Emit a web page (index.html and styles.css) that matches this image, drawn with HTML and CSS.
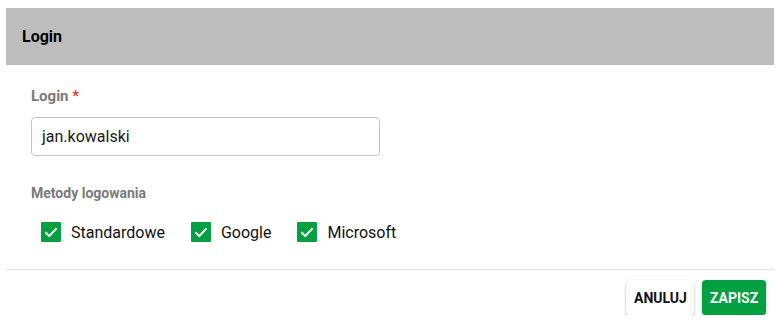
FILE: index.html
```html
<!DOCTYPE html>
<html lang="pl">
<head>
<meta charset="utf-8">
<title>Login</title>
<link rel="stylesheet" href="styles.css">
</head>
<body>
<div class="panel">
  <div class="panel-header">Login</div>
  <div class="panel-body">
    <label class="field-label">Login <span class="req">*</span></label>
    <div class="input">jan.kowalski</div>
    <div class="section-label">Metody logowania</div>
    <div class="checks">
      <div class="check">
        <span class="box"><svg viewBox="0 0 20 20" width="20" height="20"><path d="M4.5 10.2 L8.3 14 L15.6 6.4" fill="none" stroke="#fff" stroke-width="2"/></svg></span>
        <span class="check-label">Standardowe</span>
      </div>
      <div class="check">
        <span class="box"><svg viewBox="0 0 20 20" width="20" height="20"><path d="M4.5 10.2 L8.3 14 L15.6 6.4" fill="none" stroke="#fff" stroke-width="2"/></svg></span>
        <span class="check-label">Google</span>
      </div>
      <div class="check">
        <span class="box"><svg viewBox="0 0 20 20" width="20" height="20"><path d="M4.5 10.2 L8.3 14 L15.6 6.4" fill="none" stroke="#fff" stroke-width="2"/></svg></span>
        <span class="check-label">Microsoft</span>
      </div>
    </div>
  </div>
  <div class="panel-footer">
    <button class="btn btn-cancel">ANULUJ</button>
    <button class="btn btn-save">ZAPISZ</button>
  </div>
</div>
</body>
</html>
```

FILE: styles.css
```css
html, body {
  margin: 0;
  padding: 0;
  background: #fff;
}
body {
  padding: 8px 4px 0 6px;
  font-family: Roboto, "Liberation Sans", sans-serif;
  color: #111;
}
.panel {
  width: 768px;
}
.panel-header {
  height: 57px;
  background: #bdbdbd;
  display: flex;
  align-items: center;
  padding-left: 16px;
  font-size: 16px;
  font-weight: 700;
  color: #000;
  box-sizing: border-box;
}
.panel-body {
  padding: 22px 25px 25px 25px;
  border-bottom: 1px solid #e0e0e0;
}
.field-label {
  display: block;
  font-size: 15px;
  line-height: 18px;
  font-weight: 700;
  color: #7a7a7a;
}
.req {
  color: #e53935;
}
.input {
  margin-top: 12px;
  width: 349px;
  height: 39px;
  box-sizing: border-box;
  border: 1px solid #c4c4c4;
  border-radius: 4px;
  padding: 0 10px;
  display: flex;
  align-items: center;
  font-size: 16px;
  color: #1a1a1a;
}
.section-label {
  margin-top: 29px;
  font-size: 14px;
  line-height: 17px;
  font-weight: 700;
  color: #7a7a7a;
}
.checks {
  display: flex;
  margin-top: 18px;
  padding-left: 10px;
  height: 24px;
  align-items: center;
}
.check {
  display: flex;
  align-items: center;
  margin-right: 26px;
}
.box {
  width: 20px;
  height: 20px;
  background: #02a041;
  border-radius: 1px;
  display: flex;
}
.check-label {
  margin-left: 10px;
  font-size: 16px;
  color: #111;
}
.panel-footer {
  display: flex;
  justify-content: flex-end;
  gap: 8px;
  padding: 10px 8px 0 0;
}
.btn {
  height: 35px;
  padding: 0 8px;
  border: none;
  border-radius: 4px;
  font-family: Roboto, "Liberation Sans", sans-serif;
  font-size: 14px;
  font-weight: 700;
  box-shadow: 0 2px 3px rgba(0,0,0,0.25), 0 0 1px rgba(0,0,0,0.15);
}
.btn-cancel {
  background: #fff;
  color: #111;
  width: 68px;
}
.btn-save {
  background: #02a041;
  color: #fff;
  width: 64px;
}
```
